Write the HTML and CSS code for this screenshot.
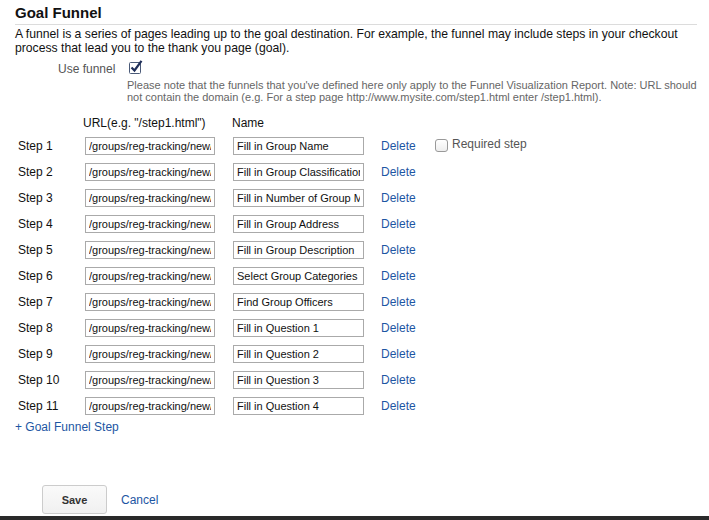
FILE: index.html
```html
<!DOCTYPE html>
<html>
<head>
<meta charset="utf-8">
<link rel="stylesheet" href="styles.css">
</head>
<body>
<div class="page">
  <h1 class="title">Goal Funnel</h1>
  <p class="intro">A funnel is a series of pages leading up to the goal destination. For example, the funnel may include steps in your checkout process that lead you to the thank you page (goal).</p>
  <div class="use-row">
    <span class="use-label">Use funnel</span>
    <svg class="use-check" width="14" height="14" viewBox="0 0 14 14"><rect x="0.5" y="2.5" width="11" height="11" rx="1" fill="#fff" stroke="#4a5a78"/><path d="M2.5 7.5 L5.5 10.5 L12.5 0.8" fill="none" stroke="#1f2f5a" stroke-width="2.2"/></svg>
  </div>
  <p class="note">Please note that the funnels that you've defined here only apply to the Funnel Visualization Report. Note: URL should not contain the domain (e.g. For a step page http://www.mysite.com/step1.html enter /step1.html).</p>

  <div class="steps">
    <div class="head"></div>
    <div class="head head-url">URL(e.g. "/step1.html")</div>
    <div class="head head-name">Name</div>
    <div class="head"></div>
    <div class="head"></div>

    <div class="step-label">Step 1</div>
    <div><input class="field url" value="/groups/reg-tracking/new/"></div>
    <div><input class="field name" value="Fill in Group Name"></div>
    <div><a class="link" href="#">Delete</a></div>
    <div class="required"><span class="req-box"></span><span class="req-text">Required step</span></div>

    <div class="step-label">Step 2</div>
    <div><input class="field url" value="/groups/reg-tracking/new/"></div>
    <div><input class="field name" value="Fill in Group Classification"></div>
    <div><a class="link" href="#">Delete</a></div>
    <div></div>

    <div class="step-label">Step 3</div>
    <div><input class="field url" value="/groups/reg-tracking/new/"></div>
    <div><input class="field name" value="Fill in Number of Group Members"></div>
    <div><a class="link" href="#">Delete</a></div>
    <div></div>

    <div class="step-label">Step 4</div>
    <div><input class="field url" value="/groups/reg-tracking/new/"></div>
    <div><input class="field name" value="Fill in Group Address"></div>
    <div><a class="link" href="#">Delete</a></div>
    <div></div>

    <div class="step-label">Step 5</div>
    <div><input class="field url" value="/groups/reg-tracking/new/"></div>
    <div><input class="field name" value="Fill in Group Description"></div>
    <div><a class="link" href="#">Delete</a></div>
    <div></div>

    <div class="step-label">Step 6</div>
    <div><input class="field url" value="/groups/reg-tracking/new/"></div>
    <div><input class="field name" value="Select Group Categories"></div>
    <div><a class="link" href="#">Delete</a></div>
    <div></div>

    <div class="step-label">Step 7</div>
    <div><input class="field url" value="/groups/reg-tracking/new/"></div>
    <div><input class="field name" value="Find Group Officers"></div>
    <div><a class="link" href="#">Delete</a></div>
    <div></div>

    <div class="step-label">Step 8</div>
    <div><input class="field url" value="/groups/reg-tracking/new/"></div>
    <div><input class="field name" value="Fill in Question 1"></div>
    <div><a class="link" href="#">Delete</a></div>
    <div></div>

    <div class="step-label">Step 9</div>
    <div><input class="field url" value="/groups/reg-tracking/new/"></div>
    <div><input class="field name" value="Fill in Question 2"></div>
    <div><a class="link" href="#">Delete</a></div>
    <div></div>

    <div class="step-label">Step 10</div>
    <div><input class="field url" value="/groups/reg-tracking/new/"></div>
    <div><input class="field name" value="Fill in Question 3"></div>
    <div><a class="link" href="#">Delete</a></div>
    <div></div>

    <div class="step-label">Step 11</div>
    <div><input class="field url" value="/groups/reg-tracking/new/"></div>
    <div><input class="field name" value="Fill in Question 4"></div>
    <div><a class="link" href="#">Delete</a></div>
    <div></div>
  </div>

  <a class="link add-step" href="#">+ Goal Funnel Step</a>

  <div class="actions">
    <button class="save">Save</button>
    <a class="link cancel" href="#">Cancel</a>
  </div>
</div>
<div class="dock"></div>
</body>
</html>
```

FILE: styles.css
```css
html, body {
  margin: 0;
  padding: 0;
  background: #fff;
}
body {
  font-family: "Liberation Sans", Arial, sans-serif;
  color: #111;
  width: 709px;
  height: 520px;
  overflow: hidden;
  display: flex;
  flex-direction: column;
}
.page {
  flex: 1;
  padding: 0 12px 0 15px;
}
.title {
  margin: 0;
  padding-top: 4px;
  font-size: 15px;
  line-height: 18px;
  font-weight: bold;
  color: #111;
  border-bottom: 1px solid #dcdcdc;
  padding-bottom: 2px;
}
.intro {
  margin: 2px 0 0;
  font-size: 12.2px;
  line-height: 14px;
  color: #111;
}
.use-row {
  display: flex;
  align-items: center;
  margin-top: 6px;
  padding-left: 43px;
  height: 16px;
}
.use-label {
  font-size: 12px;
  color: #555;
  width: 71px;
}
.use-check {
  display: block;
  margin-top: -4px;
}
.note {
  margin: 2px 0 0 112px;
  font-size: 11px;
  line-height: 12px;
  color: #666;
}
.steps {
  display: grid;
  grid-template-columns: 67px 148px 148px 54px auto;
  grid-auto-rows: 26px;
  grid-template-rows: 21px;
  align-items: center;
  margin-top: 9px;
  padding-left: 3px;
  font-size: 12px;
}
.head {
  color: #111;
  font-size: 12px;
}
.head-url {
  margin-left: -2px;
}
.head-name {
  margin-left: -1px;
}
.step-label {
  color: #111;
}
.field {
  display: block;
  box-sizing: border-box;
  height: 18px;
  padding: 0 3px;
  border: 1px solid #aaa;
  font-family: "Liberation Sans", Arial, sans-serif;
  font-size: 11px;
  color: #111;
  background: #fff;
  outline: none;
}
.url {
  width: 130px;
}
.name {
  width: 131px;
}
.link {
  color: #1d56a3;
  text-decoration: none;
}
.required {
  display: flex;
  align-items: center;
  margin-top: -4px;
}
.req-box {
  width: 11px;
  height: 11px;
  border: 1px solid #999;
  border-radius: 3px;
  background: linear-gradient(#fff, #eee);
  margin-top: 3px;
}
.req-text {
  margin-left: 4px;
  color: #555;
}
.add-step {
  display: block;
  margin-top: 1px;
  font-size: 12px;
}
.actions {
  display: flex;
  align-items: center;
  margin-top: 51px;
  padding-left: 27px;
}
.save {
  width: 65px;
  height: 29px;
  border: 1px solid #ccc;
  border-radius: 3px;
  background: linear-gradient(#fafafa, #f0f0f0);
  font-family: "Liberation Sans", Arial, sans-serif;
  font-size: 11px;
  font-weight: bold;
  color: #333;
  padding: 0;
}
.cancel {
  margin-left: 14px;
  font-size: 12px;
}
.dock {
  height: 4px;
  background: #2a2a2a;
}
```
